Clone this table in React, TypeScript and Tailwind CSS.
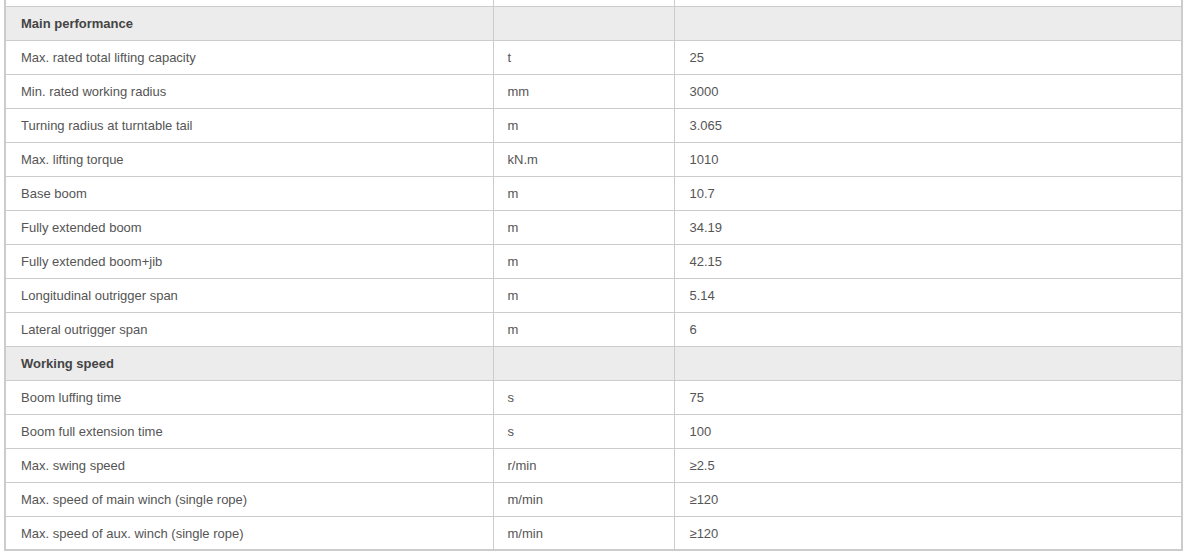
type Row = { name: string; unit?: string; value?: string; section?: boolean };

const rows: Row[] = [
  { name: "Main performance", section: true },
  { name: "Max. rated total lifting capacity", unit: "t", value: "25" },
  { name: "Min. rated working radius", unit: "mm", value: "3000" },
  { name: "Turning radius at turntable tail", unit: "m", value: "3.065" },
  { name: "Max. lifting torque", unit: "kN.m", value: "1010" },
  { name: "Base boom", unit: "m", value: "10.7" },
  { name: "Fully extended boom", unit: "m", value: "34.19" },
  { name: "Fully extended boom+jib", unit: "m", value: "42.15" },
  { name: "Longitudinal outrigger span", unit: "m", value: "5.14" },
  { name: "Lateral outrigger span", unit: "m", value: "6" },
  { name: "Working speed", section: true },
  { name: "Boom luffing time", unit: "s", value: "75" },
  { name: "Boom full extension time", unit: "s", value: "100" },
  { name: "Max. swing speed", unit: "r/min", value: "≥2.5" },
  { name: "Max. speed of main winch (single rope)", unit: "m/min", value: "≥120" },
  { name: "Max. speed of aux. winch (single rope)", unit: "m/min", value: "≥120" },
];

const SpecTable = () => {
  return (
    <div className="w-full bg-white pl-1 pr-[5px] font-['Liberation_Sans',Arial,sans-serif] text-[13px] text-[#555]">
      <table className="w-[1179px] table-fixed border-collapse border-2 border-t-0 border-[#cccccc]">
        <colgroup>
          <col className="w-[488px]" />
          <col className="w-[181px]" />
          <col />
        </colgroup>
        <tbody>
          <tr className="h-[6px]">
            <td className="border-r border-[#cccccc] p-0" />
            <td className="border-r border-[#cccccc] p-0" />
            <td className="p-0" />
          </tr>
          {rows.map((row, index) => (
            <tr
              key={index}
              className={`h-[34px] border-t border-[#cccccc] ${row.section ? "bg-[#ececec]" : "bg-white"}`}
            >
              <td
                className={`border-r border-[#cccccc] pl-[15px] pt-px align-middle ${row.section ? "font-bold text-[#444]" : ""}`}
              >
                {row.name}
              </td>
              <td className="border-r border-[#cccccc] pl-[14px] pt-px align-middle">{row.unit}</td>
              <td className="pl-[15px] pt-px align-middle">{row.value}</td>
            </tr>
          ))}
        </tbody>
      </table>
    </div>
  );
};

export default function App() {
  return (
    <div className="min-h-[560px] bg-white">
      <SpecTable />
    </div>
  );
}
